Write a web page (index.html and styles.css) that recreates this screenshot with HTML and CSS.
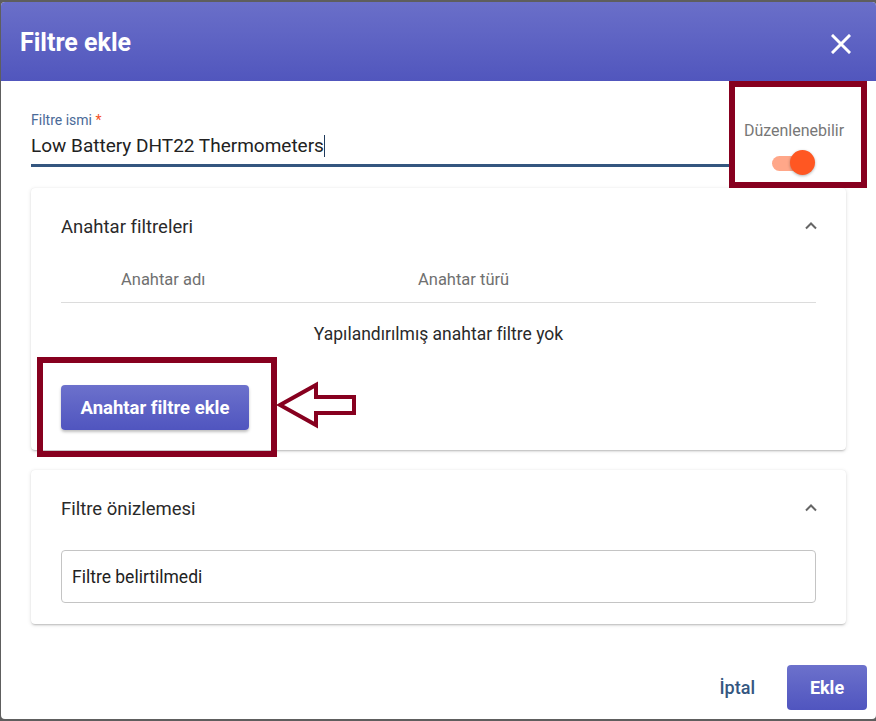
FILE: index.html
```html
<!DOCTYPE html>
<html lang="tr">
<head>
<meta charset="utf-8">
<title>Filtre ekle</title>
<link rel="stylesheet" href="styles.css">
</head>
<body>
<div class="dialog">
  <header class="dlg-header">
    <h1 class="dlg-title">Filtre ekle</h1>
    <button class="close-btn" aria-label="Kapat">
      <svg width="20" height="20" viewBox="0 0 20 20"><path d="M2 2 L18 18 M18 2 L2 18" stroke="#fff" stroke-width="3" stroke-linecap="square"/></svg>
    </button>
  </header>

  <main class="dlg-body">
    <div class="top-row">
      <div class="name-field">
        <label class="field-label">Filtre ismi <span class="req">*</span></label>
        <div class="field-value">Low Battery DHT22 Thermometers<span class="caret"></span></div>
      </div>
      <div class="editable">
        <div class="editable-label">Düzenlenebilir</div>
        <div class="toggle"><span class="track"></span><span class="thumb"></span></div>
      </div>
    </div>

    <section class="card card-keys">
      <div class="card-head">
        <span class="card-title">Anahtar filtreleri</span>
        <svg class="chev" width="14" height="9" viewBox="0 0 14 9"><path d="M2 7.5 L7 2.5 L12 7.5" fill="none" stroke="#666" stroke-width="2"/></svg>
      </div>
      <div class="table-head">
        <span></span>
        <span>Anahtar adı</span>
        <span>Anahtar türü</span>
      </div>
      <div class="empty-row">Yapılandırılmış anahtar filtre yok</div>
      <button class="btn-primary btn-add">Anahtar filtre ekle</button>
    </section>

    <section class="card card-preview">
      <div class="card-head">
        <span class="card-title">Filtre önizlemesi</span>
        <svg class="chev" width="14" height="9" viewBox="0 0 14 9"><path d="M2 7.5 L7 2.5 L12 7.5" fill="none" stroke="#666" stroke-width="2"/></svg>
      </div>
      <div class="preview-box">Filtre belirtilmedi</div>
    </section>
  </main>

  <footer class="dlg-footer">
    <button class="btn-text">İptal</button>
    <button class="btn-primary btn-ok">Ekle</button>
  </footer>

  <div class="mark mark-toggle"></div>
  <div class="mark mark-button"></div>
  <svg class="mark-arrow" width="84" height="50" viewBox="0 0 84 50">
    <polygon points="4,25 40,5 40,17 78,17 78,33 40,33 40,45" fill="#fff" stroke="#87001f" stroke-width="4" stroke-linejoin="miter"/>
  </svg>
</div>
</body>
</html>
```

FILE: styles.css
```css
* { box-sizing: border-box; }

html, body {
  margin: 0;
  padding: 0;
  background: #5e5e5e;
  width: 876px;
  height: 721px;
  overflow: hidden;
}

body {
  font-family: Roboto, "Noto Sans", "Liberation Sans", sans-serif;
  padding: 2px 0 2px 1px;
}

.dialog {
  position: relative;
  width: 875px;
  height: 717px;
  background: #fff;
  border-radius: 4px;
  overflow: hidden;
  display: flex;
  flex-direction: column;
}

.dlg-header {
  height: 79px;
  flex: none;
  background: linear-gradient(180deg, #6a6fc9 0%, #5156bd 100%);
  display: flex;
  align-items: center;
  justify-content: space-between;
  padding: 0 24px 0 19px;
}

.dlg-title {
  margin: 0;
  color: #fff;
  font-size: 25px;
  font-weight: 700;
  margin-top: 2px;
}

.close-btn {
  background: none;
  border: 0;
  padding: 0;
  width: 22px;
  height: 22px;
  display: flex;
  align-items: center;
  justify-content: center;
  margin-top: 4px;
}

.dlg-body {
  flex: none;
  padding: 0 30px;
}

.top-row {
  display: flex;
  align-items: flex-start;
  height: 107px;
}

.name-field {
  flex: 1;
  padding-top: 31px;
}

.field-label {
  display: block;
  font-size: 14px;
  color: #4a6a98;
  line-height: 16px;
}

.req { color: #f4511e; }

.field-value {
  font-size: 19px;
  color: #222;
  line-height: 26px;
  margin-top: 5px;
  padding-bottom: 5px;
  border-bottom: 3px solid #34567f;
  width: 702px;
}

.caret {
  display: inline-block;
  width: 1px;
  height: 22px;
  background: #1f3a5c;
  vertical-align: -5px;
}

.editable {
  width: 124px;
  display: flex;
  flex-direction: column;
  align-items: center;
  padding-top: 40px;
  margin-right: -9px;
}

.editable-label {
  font-size: 16px;
  color: #777;
  line-height: 20px;
}

.toggle {
  position: relative;
  width: 46px;
  height: 26px;
  margin-top: 9px;
  margin-left: -2px;
}

.track {
  position: absolute;
  left: 2px;
  top: 6px;
  width: 34px;
  height: 15px;
  border-radius: 8px;
  background: #ffa789;
}

.thumb {
  position: absolute;
  left: 20px;
  top: 0;
  width: 25px;
  height: 25px;
  border-radius: 50%;
  background: #ff5722;
  box-shadow: 0 1px 3px rgba(0,0,0,0.3);
}

.card {
  background: #fff;
  border-radius: 4px;
  box-shadow: 0 2px 2px -1px rgba(0,0,0,0.2), 0 1px 4px 0 rgba(0,0,0,0.12), 0 0 1px rgba(0,0,0,0.1);
  padding: 24px 30px 20px 30px;
  width: 815px;
}

.card-head {
  display: flex;
  align-items: center;
  justify-content: space-between;
  height: 30px;
}

.card-title {
  font-size: 18.5px;
  color: #2a2a2a;
}

.chev { margin-right: -2px; margin-top: -4px; }

.table-head {
  display: grid;
  grid-template-columns: 60px 297px 1fr;
  height: 47px;
  margin-top: 14px;
  align-items: center;
  font-size: 16.5px;
  color: #707070;
  border-bottom: 1px solid #dcdcdc;
}

.empty-row {
  height: 62px;
  display: flex;
  align-items: center;
  justify-content: center;
  font-size: 17.5px;
  color: #2a2a2a;
}

.btn-primary {
  background: linear-gradient(180deg, #6c71cc 0%, #5055bf 100%);
  color: #fff;
  border: 0;
  border-radius: 4px;
  font-family: inherit;
  font-weight: 700;
  box-shadow: 0 2px 3px rgba(0,0,0,0.25);
}

.btn-add {
  margin-top: 20px;
  width: 188px;
  height: 45px;
  font-size: 18.5px;
}

.card-preview {
  margin-top: 20px;
  padding-bottom: 21px;
}

.preview-box {
  margin-top: 26px;
  height: 53px;
  border: 1px solid #c4c4c4;
  border-radius: 4px;
  display: flex;
  align-items: center;
  padding-left: 10px;
  font-size: 17.5px;
  color: #222;
}

.dlg-footer {
  margin-top: auto;
  flex: none;
  display: flex;
  align-items: center;
  justify-content: flex-end;
  padding: 0 9px 9px 0;
  gap: 32px;
}

.btn-text {
  background: none;
  border: 0;
  font-family: inherit;
  font-size: 18px;
  font-weight: 500;
  color: #34567f;
  padding: 0;
}

.btn-ok {
  width: 80px;
  height: 45px;
  font-size: 18px;
  box-shadow: none;
}

.mark {
  position: absolute;
  border: 6px solid #87001f;
}

.mark-toggle {
  left: 728px;
  top: 79px;
  width: 138px;
  height: 107px;
}

.mark-button {
  left: 36px;
  top: 355px;
  width: 240px;
  height: 100px;
}

.mark-arrow {
  position: absolute;
  left: 275px;
  top: 378px;
}
```
